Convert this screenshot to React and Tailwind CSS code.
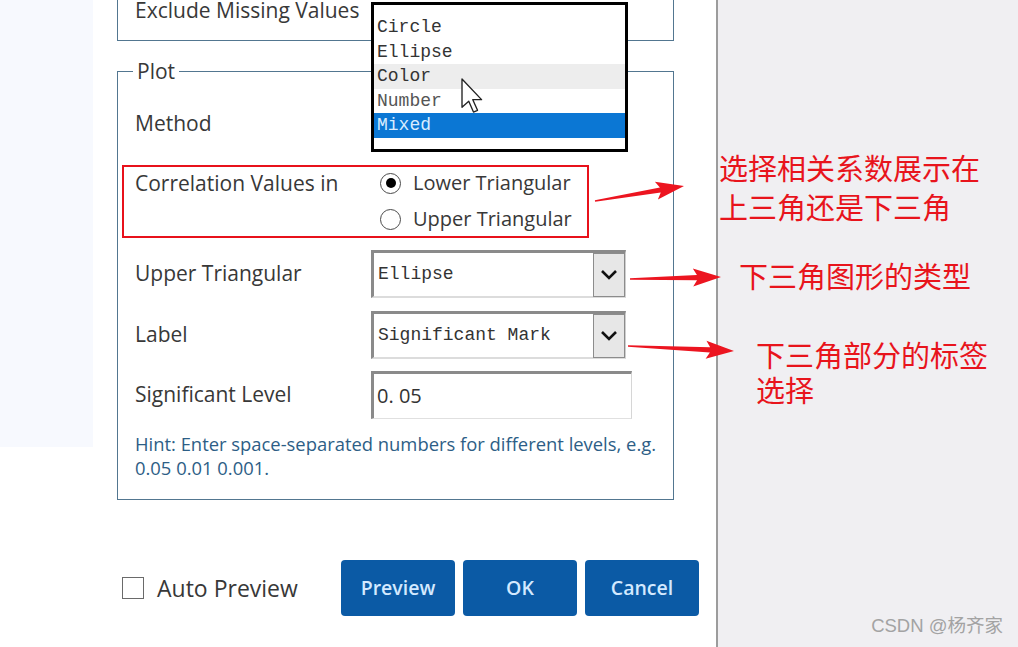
import React from 'react';

const sans = { fontFamily: '"Open Sans", "Noto Sans", sans-serif' };

// tapered red annotation arrow, from tail (x1,y1) to tip (x2,y2)
function arrowPoints(x1, y1, x2, y2) {
    const len = Math.hypot(x2 - x1, y2 - y1);
    const dx = (x2 - x1) / len;
    const dy = (y2 - y1) / len;
    const nx = -dy;
    const ny = dx;
    const headLen = 24;
    const bx = x2 - dx * headLen;
    const by = y2 - dy * headLen;
    const pts = [
        [x1 + nx * 0.8, y1 + ny * 0.8],
        [bx + nx * 2.6, by + ny * 2.6],
        [bx - dx * 4 + nx * 9, by - dy * 4 + ny * 9],
        [x2, y2],
        [bx - dx * 4 - nx * 9, by - dy * 4 - ny * 9],
        [bx - nx * 2.6, by - ny * 2.6],
        [x1 - nx * 0.8, y1 - ny * 0.8],
    ];
    return pts.map((p) => p.join(',')).join(' ');
}

function Chevron() {
    return (
        <svg width="18" height="12" viewBox="0 0 18 12">
            <path d="M2 2 L9 9 L16 2" fill="none" stroke="#111" strokeWidth="2.6" />
        </svg>
    );
}

function SelectBox({ value }) {
    return (
        <div className="flex h-[48px] w-[255px] items-center border-t-[3px] border-l-[3px] border-r border-b-2 border-t-[#8a8a8a] border-l-[#8a8a8a] border-r-[#cfcfcf] border-b-[#dcdcdc] bg-white">
            <span className="flex-1 pl-[4px] text-[18px] text-[#333]" style={{ fontFamily: '"Liberation Mono", monospace' }}>
                {value}
            </span>
            <div className="flex h-[44px] w-[32px] items-center justify-center border border-[#8c8c8c] bg-[#e7e7e7]">
                <Chevron />
            </div>
        </div>
    );
}

function Radio({ checked, label }) {
    return (
        <div className="flex h-[36px] items-center gap-[12px] pl-[9px]">
            <div className="flex h-[21px] w-[21px] items-center justify-center rounded-full border-[1.5px] border-[#4a4a4a] bg-white">
                {checked && <div className="h-[10px] w-[10px] rounded-full bg-black" />}
            </div>
            <span className="text-[20px] text-[#383838]">{label}</span>
        </div>
    );
}

export default function App() {
    return (
        <div className="relative flex h-[647px] w-[1018px] overflow-hidden bg-white" style={sans}>
            {/* left strip */}
            <div className="flex w-[93px] shrink-0 flex-col">
                <div className="h-[447px] bg-[#f7f9fe]" />
                <div className="flex-1 bg-white" />
            </div>

            {/* dialog */}
            <div className="relative flex w-[623px] shrink-0 flex-col bg-white pl-[24px]">
                {/* top fieldset */}
                <div className="-mt-[30px] h-[71px] w-[557px] border border-[#527690] pl-[17px] pt-[27px]">
                    <span className="text-[21px] leading-[24px] text-[#383838]">Exclude Missing Values</span>
                </div>

                {/* plot fieldset */}
                <div className="relative mt-[30px] flex w-[557px] flex-col border border-[#527690] pb-[19px] pt-[28px]">
                    <span className="absolute -top-[13px] left-[15px] bg-white px-[4px] text-[21px] leading-[24px] text-[#383838]">
                        Plot
                    </span>

                    <div className="flex h-[48px] items-center">
                        <div className="w-[253px] shrink-0 pl-[17px] text-[21px] text-[#383838]">Method</div>
                    </div>

                    <div className="relative mt-[17px] flex h-[72px]">
                        <div className="w-[253px] shrink-0 pl-[17px] text-[21px] leading-[36px] text-[#383838]">
                            Correlation Values in
                        </div>
                        <div className="flex flex-col">
                            <Radio checked label="Lower Triangular" />
                            <Radio label="Upper Triangular" />
                        </div>
                        <div className="absolute left-[4px] top-0 h-[73px] w-[467px] border-2 border-[#e8111b]" />
                    </div>

                    <div className="mt-[13px] flex h-[48px] items-center">
                        <div className="w-[253px] shrink-0 pl-[17px] text-[21px] text-[#383838]">Upper Triangular</div>
                        <SelectBox value="Ellipse" />
                    </div>

                    <div className="mt-[13px] flex h-[48px] items-center">
                        <div className="w-[253px] shrink-0 pl-[17px] text-[21px] text-[#383838]">Label</div>
                        <SelectBox value="Significant Mark" />
                    </div>

                    <div className="mt-[12px] flex h-[48px] items-center">
                        <div className="w-[253px] shrink-0 pl-[17px] text-[21px] text-[#383838]">Significant Level</div>
                        <div className="flex h-[48px] w-[261px] items-center border-t-[3px] border-l-[3px] border-r border-b border-t-[#8a8a8a] border-l-[#8a8a8a] border-r-[#d6d6d6] border-b-[#e0e0e0] bg-white pl-[3px] text-[20px] text-[#333]">
                            0. 05
                        </div>
                    </div>

                    <p className="mt-[13px] pl-[17px] text-[18.4px] leading-[24px] text-[#2d5e86]">
                        Hint: Enter space-separated numbers for different levels, e.g.
                        <br />
                        0.05 0.01 0.001.
                    </p>
                </div>

                {/* footer */}
                <div className="mt-[60px] flex h-[56px] items-center">
                    <div className="flex w-[224px] shrink-0 items-center gap-[13px] pl-[5px]">
                        <div className="h-[22px] w-[22px] border-[1.5px] border-[#6a6a6a] bg-white" />
                        <span className="text-[23px] text-[#383838]">Auto Preview</span>
                    </div>
                    <div className="flex gap-[8px]">
                        {['Preview', 'OK', 'Cancel'].map((b) => (
                            <button
                                key={b}
                                className="flex h-[56px] w-[114px] items-center justify-center rounded-[4px] bg-[#0b5aa5] text-[19.5px] font-semibold text-[#d3e9ff]"
                            >
                                {b}
                            </button>
                        ))}
                    </div>
                </div>

                {/* open dropdown list */}
                <div className="absolute left-[278px] top-[2px] h-[150px] w-[257px] border-[3px] border-black bg-white pt-[10px]">
                    <ul className="text-[18px] leading-[24.5px]" style={{ fontFamily: '"Liberation Mono", monospace' }}>
                        <li className="pl-[3px] text-[#333]">Circle</li>
                        <li className="pl-[3px] text-[#333]">Ellipse</li>
                        <li className="bg-[#ededed] pl-[3px] text-[#333]">Color</li>
                        <li className="pl-[3px] text-[#555]">Number</li>
                        <li className="bg-[#0b77d4] pl-[3px] text-[#d8ecff]">Mixed</li>
                    </ul>
                </div>
            </div>

            {/* divider */}
            <div className="w-[2px] shrink-0 bg-[#9c9c9c]" />

            {/* annotation panel */}
            <div
                className="flex flex-1 flex-col bg-[#f0eff2] text-[29px] text-[#e8141c]"
                style={{ fontFamily: '"Noto Sans CJK SC", sans-serif' }}
            >
                <div className="mt-[148px] pl-[1px] leading-[39px]">
                    选择相关系数展示在
                    <br />
                    上三角还是下三角
                </div>
                <div className="mt-[30px] pl-[21px] leading-[39px]">下三角图形的类型</div>
                <div className="mt-[42px] pl-[38px] leading-[35px]">
                    下三角部分的标签
                    <br />
                    选择
                </div>
            </div>

            {/* arrows and cursor */}
            <svg className="pointer-events-none absolute inset-0" width="1018" height="647">
                <polygon points={arrowPoints(595, 201, 684, 186)} fill="#ec1520" />
                <polygon points={arrowPoints(630, 279, 721, 277)} fill="#ec1520" />
                <polygon points={arrowPoints(628, 346, 734, 351)} fill="#ec1520" />
                <path
                    transform="translate(462 79) scale(1.35)"
                    d="M0 0 L0 21 L5 16.5 L8.5 24.5 L11.5 23.2 L8 15.3 L14.5 15.3 Z"
                    fill="#fff"
                    stroke="#222"
                    strokeWidth="1"
                    strokeLinejoin="round"
                />
            </svg>

            <div
                className="absolute bottom-[7px] right-[15px] text-[18.5px] text-[#a3a3a3]"
                style={{ fontFamily: '"Liberation Sans", "Noto Sans CJK SC", sans-serif' }}
            >
                CSDN @杨齐家
            </div>
        </div>
    );
}
